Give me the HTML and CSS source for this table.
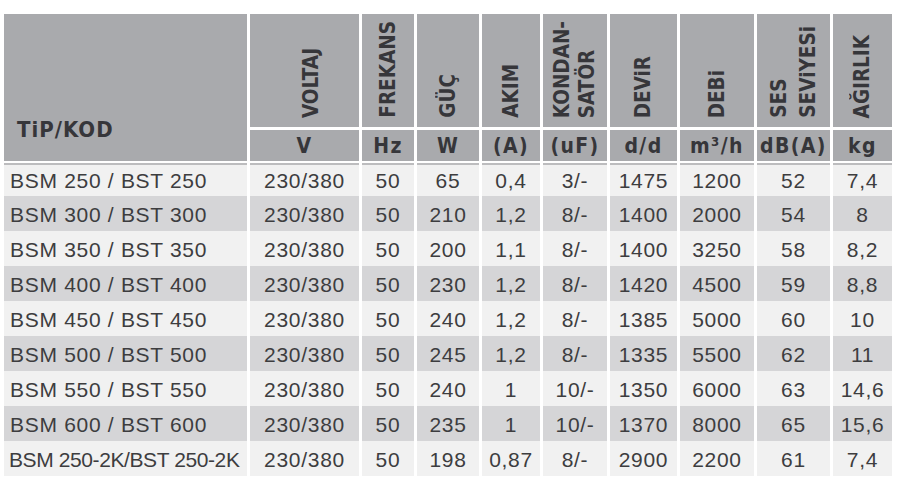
FILE: index.html
```html
<!DOCTYPE html>
<html lang="tr">
<head>
<meta charset="utf-8">
<title>BSM / BST Teknik Özellikler</title>
<link rel="stylesheet" href="styles.css">
</head>
<body>
<table class="spec">
  <colgroup>
    <col class="w-kod"><col class="w-voltaj"><col class="w-frekans"><col class="w-guc"><col class="w-akim">
    <col class="w-kond"><col class="w-devir"><col class="w-debi"><col class="w-ses"><col class="w-agirlik">
  </colgroup>
  <thead>
    <tr class="h-names">
      <th rowspan="2" class="kod">TiP/KOD</th>
      <th class="voltaj"><span class="vtext">VOLTAJ</span></th>
      <th class="frekans"><span class="vtext">FREKANS</span></th>
      <th><span class="vtext">GÜÇ</span></th>
      <th><span class="vtext">AKIM</span></th>
      <th><span class="vtext two kond">KONDAN-<br>SATÖR</span></th>
      <th><span class="vtext">DEViR</span></th>
      <th><span class="vtext">DEBi</span></th>
      <th><span class="vtext two ses">SES<br>SEViYESi</span></th>
      <th><span class="vtext">AĞIRLIK</span></th>
    </tr>
    <tr class="h-units">
      <th>V</th>
      <th>Hz</th>
      <th>W</th>
      <th>(A)</th>
      <th>(uF)</th>
      <th>d/d</th>
      <th>m³/h</th>
      <th>dB(A)</th>
      <th>kg</th>
    </tr>
  </thead>
  <tbody>
    <tr><td>BSM 250 / BST 250</td><td>230/380</td><td>50</td><td>65</td><td>0,4</td><td>3/-</td><td>1475</td><td>1200</td><td>52</td><td>7,4</td></tr>
    <tr><td>BSM 300 / BST 300</td><td>230/380</td><td>50</td><td>210</td><td>1,2</td><td>8/-</td><td>1400</td><td>2000</td><td>54</td><td>8</td></tr>
    <tr><td>BSM 350 / BST 350</td><td>230/380</td><td>50</td><td>200</td><td>1,1</td><td>8/-</td><td>1400</td><td>3250</td><td>58</td><td>8,2</td></tr>
    <tr><td>BSM 400 / BST 400</td><td>230/380</td><td>50</td><td>230</td><td>1,2</td><td>8/-</td><td>1420</td><td>4500</td><td>59</td><td>8,8</td></tr>
    <tr><td>BSM 450 / BST 450</td><td>230/380</td><td>50</td><td>240</td><td>1,2</td><td>8/-</td><td>1385</td><td>5000</td><td>60</td><td>10</td></tr>
    <tr><td>BSM 500 / BST 500</td><td>230/380</td><td>50</td><td>245</td><td>1,2</td><td>8/-</td><td>1335</td><td>5500</td><td>62</td><td>11</td></tr>
    <tr><td>BSM 550 / BST 550</td><td>230/380</td><td>50</td><td>240</td><td>1</td><td>10/-</td><td>1350</td><td>6000</td><td>63</td><td>14,6</td></tr>
    <tr><td>BSM 600 / BST 600</td><td>230/380</td><td>50</td><td>235</td><td>1</td><td>10/-</td><td>1370</td><td>8000</td><td>65</td><td>15,6</td></tr>
    <tr><td class="tight">BSM 250-2K/BST 250-2K</td><td>230/380</td><td>50</td><td>198</td><td>0,87</td><td>8/-</td><td>2900</td><td>2200</td><td>61</td><td>7,4</td></tr>
  </tbody>
</table>
</body>
</html>
```

FILE: styles.css
```css
html, body {
  margin: 0;
  background: #ffffff;
}

body {
  padding: 14px 0 0 1px;
}

.spec {
  border-collapse: separate;
  border-spacing: 3px 0;
  table-layout: fixed;
  width: 894px;
}

.w-kod { width: 243px; }
.w-voltaj { width: 109px; }
.w-frekans { width: 52px; }
.w-guc { width: 62px; }
.w-akim { width: 58px; }
.w-kond { width: 64px; }
.w-devir { width: 67px; }
.w-debi { width: 74px; }
.w-ses { width: 73px; }
.w-agirlik { width: 59px; }

.spec th {
  background: #a9aaad;
  color: #36363a;
  font-family: "DejaVu Sans Condensed", "DejaVu Sans", sans-serif;
  font-stretch: condensed;
  font-weight: bold;
  padding: 0;
}

.h-names th {
  height: 108px;
  padding-bottom: 5px;
  border-bottom: 3px solid #ffffff;
  vertical-align: bottom;
  text-align: center;
}

.spec th.kod {
  height: auto;
  text-align: left;
  vertical-align: bottom;
  font-size: 22px;
  letter-spacing: 1px;
  padding: 0 0 19px 13px;
  border-bottom: 2px solid #ffffff;
}

.vtext {
  display: inline-block;
  writing-mode: vertical-rl;
  transform: rotate(180deg);
  text-align: left;
  font-size: 20.5px;
  line-height: 21px;
  font-kerning: none;
  white-space: nowrap;
}

.vtext.kond { line-height: 25px; }
.vtext.ses { line-height: 29px; }

.h-names th.voltaj { padding-left: 14px; }

.h-units th {
  height: 31px;
  border-bottom: 2px solid #ffffff;
  font-size: 21px;
  letter-spacing: 1.4px;
  text-align: center;
  vertical-align: middle;
}

.spec td {
  height: 33px;
  padding: 2px 0 0;
  font-family: "Liberation Sans", Arial, sans-serif;
  font-size: 21px;
  letter-spacing: 0.7px;
  color: #3d3d3f;
  text-align: center;
  vertical-align: middle;
  white-space: nowrap;
  background: #f1f1f1;
}

.spec td:first-child {
  text-align: left;
  padding-left: 6px;
}

.spec td.tight {
  letter-spacing: -0.4px;
  padding-left: 5px;
}

.spec tbody tr:nth-child(even) td {
  background: #d5d5d7;
}

.spec tbody tr:first-child td {
  height: 31px;
  padding-top: 0;
  border-top: 2px solid #bcbcbe;
}
```
